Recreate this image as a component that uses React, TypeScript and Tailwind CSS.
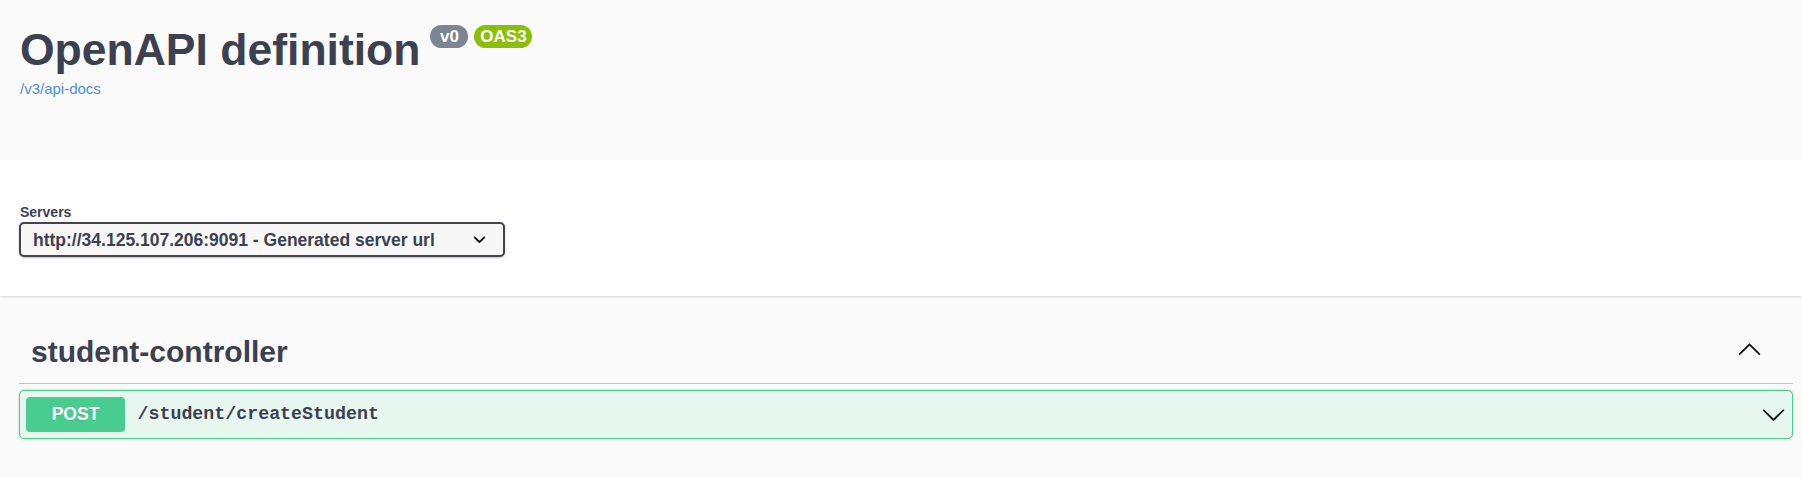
const ArrowDown = ({ className }: { className?: string }) => (
  <svg className={className} viewBox="0 0 20 20" width="25" height="25" fill="currentColor">
    <path d="M17.418 6.109c.272-.268.709-.268.979 0s.271.701 0 .969l-7.908 7.83c-.27.268-.707.268-.979 0l-7.908-7.83c-.27-.268-.27-.701 0-.969.271-.268.709-.268.979 0L10 13.25l7.418-7.141z" />
  </svg>
);

const ArrowUp = ({ className }: { className?: string }) => (
  <svg className={className} viewBox="0 0 20 20" width="25" height="25" fill="currentColor">
    <path d="M17.418 14.908c.272.268.709.268.979 0s.271-.701 0-.969l-7.908-7.83c-.27-.268-.707-.268-.979 0l-7.908 7.83c-.27.268-.27.701 0 .969.271.268.709.268.979 0L10 7.767l7.418 7.141z" />
  </svg>
);

const SelectArrow = () => (
  <svg viewBox="0 0 20 20" width="25" height="25" fill="#000">
    <path d="M13.418 7.859a.695.695 0 01.978 0 .68.68 0 010 .969l-3.908 3.83a.697.697 0 01-.979 0l-3.908-3.83a.68.68 0 010-.969.695.695 0 01.978 0L10 11l3.418-3.141z" />
  </svg>
);

export default function App() {
  return (
    <div className="min-h-screen bg-[#fafafa] font-['Liberation_Sans',Arial,sans-serif] text-[#3b4151]">
      {/* info */}
      <div className="h-[160px] pl-[20px] pt-[24px]">
        <div className="flex items-start">
          <h2 className="text-[44.5px] font-bold leading-[51px]">OpenAPI definition</h2>
          <span className="ml-[10px] mt-[1px] flex h-[23px] w-[38px] items-center justify-center rounded-full bg-[#7d8492] text-[17px] font-bold text-white">
            v0
          </span>
          <span className="ml-[6px] mt-[1px] flex h-[23px] w-[58px] items-center justify-center rounded-full bg-[#89bf04] text-[17px] font-bold text-white">
            OAS3
          </span>
        </div>
        <a className="mt-[5px] block w-fit text-[15px] leading-[17px] text-[#4990e2]" href="#">
          /v3/api-docs
        </a>
      </div>

      {/* servers */}
      <div className="relative z-10 h-[136px] bg-white pl-[19px] pt-[44px] shadow-[0_1px_2px_0_rgba(0,0,0,0.15)]">
        <div className="pl-[1px] text-[14px] font-bold leading-[16px]">Servers</div>
        <div className="mt-[2px] flex h-[35px] w-[486px] items-center rounded-[5px] border-2 border-[#41444e] bg-[#f7f7f7] pl-[12px] pr-[11px] shadow-[0_1px_2px_0_rgba(0,0,0,0.25)]">
          <span className="flex-1 truncate text-[17.5px] font-bold leading-[20px]">
            http://34.125.107.206:9091 - Generated server url
          </span>
          <SelectArrow />
        </div>
      </div>

      {/* operations */}
      <div className="pl-[19px] pr-[9px] pt-[38px]">
        <div className="flex items-start justify-between border-b border-[#c4c5c9] pb-[14px] pl-[12px] pr-[31px]">
          <h3 className="text-[30px] font-bold leading-[35px]">student-controller</h3>
          <ArrowUp className="mt-[2px] text-[#111]" />
        </div>

        <div className="mt-[6px] flex items-center rounded-[5px] border border-[#49cc90] bg-[#e8f6f0] p-[6px] shadow-[0_0_3px_0_rgba(0,0,0,0.19)]">
          <span className="flex h-[35px] w-[99px] items-center justify-center rounded-[4px] bg-[#49cc90] text-[17.5px] font-bold text-white [text-shadow:0_1px_0_rgba(0,0,0,0.1)]">
            POST
          </span>
          <span className="ml-[12.5px] font-['Liberation_Mono',monospace] text-[18.3px] font-bold text-[#3b4151]">
            /student/createStudent
          </span>
          <ArrowDown className="ml-auto text-[#111]" />
        </div>
      </div>
    </div>
  );
}
